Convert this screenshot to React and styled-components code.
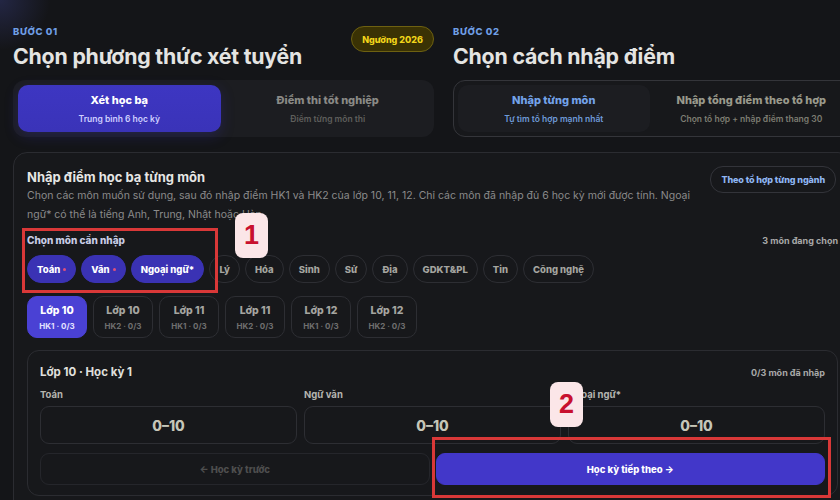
import React from "react";
import styled, { createGlobalStyle } from "styled-components";

const GlobalStyle = createGlobalStyle`
  html, body {
    margin: 0;
    padding: 0;
    background: #141518;
    overflow: hidden;
  }
  body {
    font-family: Inter, "Noto Sans", "DejaVu Sans", sans-serif;
    color: #e6e6e6;
  }
`;

const Page = styled.div`
  position: relative;
  width: 865px;
  height: 500px;
  padding: 0 13px;
  box-sizing: border-box;
  background: radial-gradient(circle at 0 0, rgba(80, 90, 200, 0.25), transparent 50px), #141518;
`;

// STEP HEADERS
const Steps = styled.div`
  display: grid;
  grid-template-columns: 421px 1fr;
  column-gap: 19px;
  padding-top: 26px;
`;

const Step = styled.div`
  display: flex;
  flex-direction: column;
`;

const StepHead = styled.div`
  display: flex;
  justify-content: space-between;
  align-items: flex-start;
  height: 54px;
`;

const StepLabel = styled.div`
  font-size: 9.5px;
  font-weight: 800;
  letter-spacing: 0.6px;
  color: #6f9fe6;
  line-height: 12px;
`;

const StepTitle = styled.h1`
  margin: 4px 0 0;
  font-size: 21.3px;
  font-weight: 700;
  color: #e4e4e2;
  letter-spacing: -0.2px;
  line-height: 28px;
`;

const Badge = styled.span`
  height: 26px;
  padding: 0 10px;
  box-sizing: border-box;
  display: flex;
  align-items: center;
  border-radius: 13px;
  background: #3a3204;
  border: 1px solid #6e6111;
  color: #f2d51a;
  font-size: 9px;
  font-weight: 800;
`;

const Segment = styled.div`
  display: grid;
  grid-template-columns: 1fr 1fr;
  gap: 6px;
  padding: 4px;
  height: 57px;
  box-sizing: border-box;
  border-radius: 12px;
  background: ${(p) => (p.outlined ? "#17181b" : "#1c1d21")};
  border: 1px solid ${(p) => (p.outlined ? "#34353a" : "transparent")};
`;

const SegTab = styled.div`
  border-radius: 10px;
  display: flex;
  flex-direction: column;
  align-items: center;
  justify-content: center;
  gap: 7px;
  background: ${(p) =>
    p.variant === "solid"
      ? "linear-gradient(180deg, #3d36c2, #3a33b8)"
      : p.variant === "soft"
      ? "#1c1d21"
      : "transparent"};
  box-shadow: ${(p) => (p.variant === "solid" ? "0 4px 14px rgba(60,50,200,0.25)" : "none")};
`;

const SegTitle = styled.div`
  font-size: 11px;
  font-weight: 800;
  color: ${(p) => p.color};
`;

const SegSub = styled.div`
  font-size: 8.5px;
  font-weight: 600;
  color: ${(p) => p.color};
`;

// MAIN CARD
const Card = styled.section`
  margin-top: 15px;
  border: 1px solid #2b2c31;
  border-radius: 14px;
  background: #17181b;
  padding: 13px 13px 0;
  height: 380px;
  box-sizing: border-box;
`;

const CardHead = styled.div`
  display: flex;
  justify-content: space-between;
  align-items: flex-start;
`;

const CardTitle = styled.h2`
  margin: 3px 0 0;
  font-size: 13px;
  font-weight: 700;
  color: #e6e6e4;
`;

const Pill = styled.span`
  height: 25px;
  padding: 0 10px;
  margin-right: 2px;
  border: 1px solid #33343a;
  border-radius: 13px;
  display: flex;
  align-items: center;
  font-size: 9px;
  font-weight: 800;
  color: #8fb6f2;
  letter-spacing: -0.1px;
`;

const Desc = styled.p`
  margin: 1px 0 0;
  width: 665px;
  font-size: 10.5px;
  line-height: 19px;
  color: #8b8b8b;
`;

const PickHead = styled.div`
  display: flex;
  justify-content: space-between;
  align-items: center;
  margin-top: 10px;
`;

const PickLabel = styled.span`
  font-size: 10px;
  font-weight: 800;
  color: #c9cde6;
`;

const Count = styled.span`
  font-size: 9px;
  font-weight: 700;
  color: #a8a8a8;
`;

const ChipRow = styled.div`
  display: flex;
  gap: 5px;
  margin-top: 9px;
`;

const Chip = styled.span`
  height: 28px;
  padding: 0 9px;
  border-radius: 14px;
  box-sizing: border-box;
  display: flex;
  align-items: center;
  gap: 3px;
  font-size: 9.5px;
  font-weight: 800;
  background: ${(p) => (p.active ? "#3a32b4" : "transparent")};
  border: 1px solid ${(p) => (p.active ? "#3a32b4" : "#2d2e33")};
  color: ${(p) => (p.active ? "#ffffff" : "#a5a5a0")};
`;

const Dot = styled.span`
  width: 3px;
  height: 3px;
  border-radius: 50%;
  background: #e0507a;
`;

const TermRow = styled.div`
  display: flex;
  gap: 6px;
  margin-top: 13px;
`;

const Term = styled.div`
  width: 60px;
  height: 42px;
  box-sizing: border-box;
  border-radius: 10px;
  display: flex;
  flex-direction: column;
  align-items: center;
  justify-content: center;
  gap: 4px;
  background: ${(p) => (p.active ? "#4a41d4" : "transparent")};
  border: 1px solid ${(p) => (p.active ? "#4a41d4" : "#2d2e33")};
`;

const TermTitle = styled.span`
  font-size: 10.5px;
  font-weight: 800;
  color: ${(p) => (p.active ? "#ffffff" : "#a5a5a0")};
`;

const TermSub = styled.span`
  font-size: 8px;
  font-weight: 700;
  color: ${(p) => (p.active ? "#e3e1ff" : "#6f6f6f")};
`;

const Panel = styled.div`
  margin-top: 12px;
  border: 1px solid #2b2c31;
  border-radius: 12px;
  padding: 13px 12px 12px;
  box-sizing: border-box;
  height: 146px;
`;

const PanelHead = styled.div`
  display: flex;
  justify-content: space-between;
  align-items: center;
  height: 16px;
`;

const PanelTitle = styled.span`
  font-size: 11.5px;
  font-weight: 700;
  color: #e0e0de;
`;

const Fields = styled.div`
  display: grid;
  grid-template-columns: 1fr 1fr 1fr;
  gap: 7px;
  margin-top: 9px;
`;

const Field = styled.div`
  display: flex;
  flex-direction: column;
  gap: 6px;
`;

const FieldLabel = styled.span`
  font-size: 9.5px;
  font-weight: 700;
  color: #b5b5b0;
`;

const Input = styled.div`
  height: 36px;
  border: 1px solid #2d2e33;
  border-radius: 9px;
  display: flex;
  align-items: center;
  justify-content: center;
  font-size: 14px;
  font-weight: 800;
  color: #c6c6b8;
  background: #17181b;
`;

const Actions = styled.div`
  display: grid;
  grid-template-columns: 1fr 1fr;
  gap: 6px;
  margin-top: 9px;
`;

const NavButton = styled.div`
  height: 32px;
  border-radius: 9px;
  box-sizing: border-box;
  display: flex;
  align-items: center;
  justify-content: center;
  font-size: 9.5px;
  font-weight: 800;
  background: ${(p) => (p.primary ? "#4237c9" : "transparent")};
  border: 1px solid ${(p) => (p.primary ? "#4237c9" : "#25262b")};
  color: ${(p) => (p.primary ? "#ffffff" : "#4e4e4e")};
`;

// ANNOTATIONS (drawn over the screenshot)
const Frame = styled.div`
  position: absolute;
  border: 3px solid #d93838;
  box-sizing: border-box;
  pointer-events: none;
`;

const Marker = styled.div`
  position: absolute;
  width: 33px;
  height: 45px;
  border-radius: 8px;
  background: #fbe6e8;
  color: #c8102e;
  font-family: "Liberation Sans", Arial, sans-serif;
  font-size: 27px;
  font-weight: 700;
  display: flex;
  align-items: center;
  justify-content: center;
`;

const subjects = [
  { name: "Toán", active: true, dot: true },
  { name: "Văn", active: true, dot: true },
  { name: "Ngoại ngữ*", active: true },
  { name: "Lý" },
  { name: "Hóa" },
  { name: "Sinh" },
  { name: "Sử" },
  { name: "Địa" },
  { name: "GDKT&PL" },
  { name: "Tin" },
  { name: "Công nghệ" },
];

const terms = [
  ["Lớp 10", "HK1 · 0/3"],
  ["Lớp 10", "HK2 · 0/3"],
  ["Lớp 11", "HK1 · 0/3"],
  ["Lớp 11", "HK2 · 0/3"],
  ["Lớp 12", "HK1 · 0/3"],
  ["Lớp 12", "HK2 · 0/3"],
];

const App = () => {
  return (
    <Page>
      <GlobalStyle />
      <Steps>
        <Step>
          <StepHead>
            <div>
              <StepLabel>BƯỚC 01</StepLabel>
              <StepTitle>Chọn phương thức xét tuyển</StepTitle>
            </div>
            <Badge>Ngưỡng 2026</Badge>
          </StepHead>
          <Segment>
            <SegTab variant="solid">
              <SegTitle color="#ffffff">Xét học bạ</SegTitle>
              <SegSub color="#cfd0ff">Trung bình 6 học kỳ</SegSub>
            </SegTab>
            <SegTab>
              <SegTitle color="#8a8a86">Điểm thi tốt nghiệp</SegTitle>
              <SegSub color="#5f5f5c">Điểm từng môn thi</SegSub>
            </SegTab>
          </Segment>
        </Step>
        <Step>
          <StepHead>
            <div>
              <StepLabel>BƯỚC 02</StepLabel>
              <StepTitle>Chọn cách nhập điểm</StepTitle>
            </div>
          </StepHead>
          <Segment outlined>
            <SegTab variant="soft">
              <SegTitle color="#73a3ea">Nhập từng môn</SegTitle>
              <SegSub color="#6f9bd8">Tự tìm tổ hợp mạnh nhất</SegSub>
            </SegTab>
            <SegTab>
              <SegTitle color="#9a9a8c">Nhập tổng điểm theo tổ hợp</SegTitle>
              <SegSub color="#7d7d72">Chọn tổ hợp + nhập điểm thang 30</SegSub>
            </SegTab>
          </Segment>
        </Step>
      </Steps>

      <Card>
        <CardHead>
          <div>
            <CardTitle>Nhập điểm học bạ từng môn</CardTitle>
            <Desc>
              Chọn các môn muốn sử dụng, sau đó nhập điểm HK1 và HK2 của lớp 10, 11, 12. Chỉ các
              môn đã nhập đủ 6 học kỳ mới được tính. Ngoại ngữ* có thể là tiếng Anh, Trung, Nhật
              hoặc Hàn.
            </Desc>
          </div>
          <Pill>Theo tổ hợp từng ngành</Pill>
        </CardHead>

        <PickHead>
          <PickLabel>Chọn môn cần nhập</PickLabel>
          <Count>3 môn đang chọn</Count>
        </PickHead>
        <ChipRow>
          {subjects.map((s) => (
            <Chip key={s.name} active={s.active}>
              {s.name}
              {s.dot && <Dot />}
            </Chip>
          ))}
        </ChipRow>

        <TermRow>
          {terms.map(([t, sub], i) => (
            <Term key={i} active={i === 0}>
              <TermTitle active={i === 0}>{t}</TermTitle>
              <TermSub active={i === 0}>{sub}</TermSub>
            </Term>
          ))}
        </TermRow>

        <Panel>
          <PanelHead>
            <PanelTitle>Lớp 10 · Học kỳ 1</PanelTitle>
            <Count>0/3 môn đã nhập</Count>
          </PanelHead>
          <Fields>
            {["Toán", "Ngữ văn", "Ngoại ngữ*"].map((f) => (
              <Field key={f}>
                <FieldLabel>{f}</FieldLabel>
                <Input>0–10</Input>
              </Field>
            ))}
          </Fields>
          <Actions>
            <NavButton>← Học kỳ trước</NavButton>
            <NavButton primary>Học kỳ tiếp theo →</NavButton>
          </Actions>
        </Panel>
      </Card>

      <Frame style={{ left: 22, top: 228, width: 196, height: 65 }} />
      <Marker style={{ left: 235, top: 213 }}>1</Marker>
      <Frame style={{ left: 432, top: 437, width: 399, height: 61 }} />
      <Marker style={{ left: 550, top: 382 }}>2</Marker>
    </Page>
  );
};

export default App;
